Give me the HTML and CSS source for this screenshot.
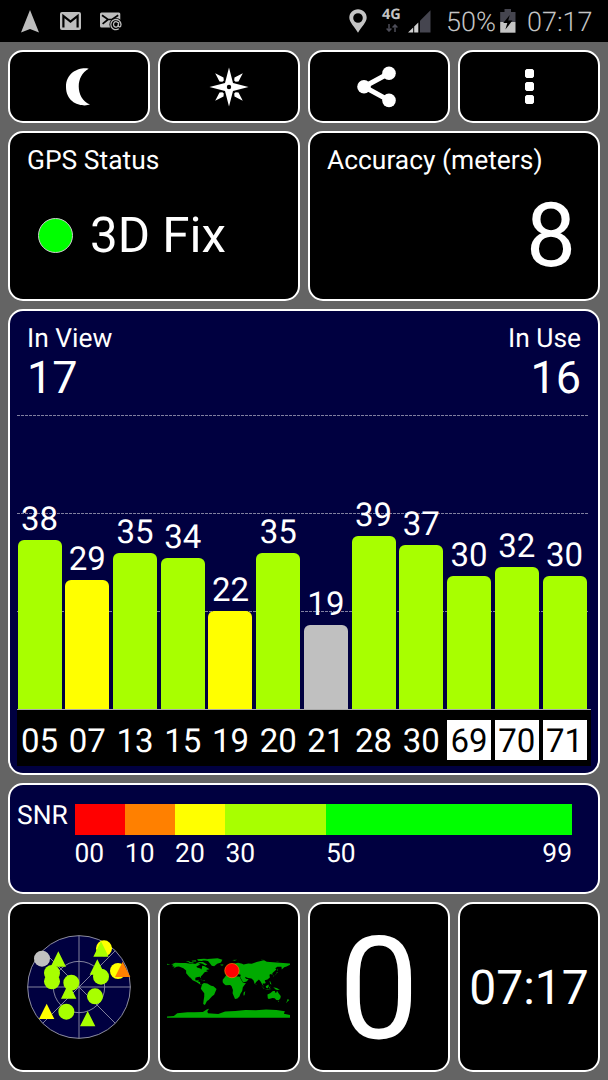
FILE: index.html
```html
<!doctype html>
<html>
<head>
  <meta charset="utf-8">
  <title>GPS Status</title>
  <link rel="stylesheet" href="styles.css">
</head>
<body>
  <div class="statusbar">
    <svg class="ic-nav" width="18" height="23" viewBox="0 0 18 23"><path d="M9 0L18 22.5L9 19L0 22.5Z" fill="#bdbdbd"/></svg>
    <svg class="ic-mail" width="21" height="18" viewBox="0 0 21 18">
      <rect width="21" height="18" rx="2" fill="#bdbdbd"/>
      <path d="M3.4 15.5V4L10.5 9.6L17.6 4V15.5" fill="none" stroke="#000" stroke-width="2.2"/>
    </svg>
    <svg class="ic-mailat" width="22" height="19" viewBox="0 0 22 19">
      <rect y="0.5" width="20.3" height="15" rx="1.5" fill="#bdbdbd"/>
      <path d="M2 3.2L8 7.5H12L18.2 3.2M2.6 11.8L8 7.5M12 7.5L14 9" fill="none" stroke="#000" stroke-width="1.7"/>
      <circle cx="16" cy="12.5" r="6.6" fill="#000"/>
      <path d="M18.8 16.8A5.1 5.1 0 1 1 21 12.4C21 15.4 18.2 15.4 18.3 13.5L18.7 10.2M18.3 12.6A2.4 2.7 0 1 1 17.9 10.9" fill="none" stroke="#bdbdbd" stroke-width="1.3"/>
    </svg>
    <span class="space"></span>
    <svg class="ic-pin" width="18" height="24" viewBox="0 0 18 24"><path fill-rule="evenodd" d="M9 0.3C14 .3 17.7 4 17.7 8.7C17.7 13.5 12 18 9 23.7C6 18 .3 13.5 .3 8.7C.3 4 4 .3 9 .3ZM9 4.2A4.8 4.8 0 1 0 9 13.8A4.8 4.8 0 1 0 9 4.2Z" fill="#c4c4c4"/></svg>
    <div class="net">
      <span>4G</span>
      <svg width="12" height="8" viewBox="0 0 12 8"><path d="M3 0V7M.6 4.4L3 7L5.4 4.4M9 8V1M6.6 3.6L9 1L11.4 3.6" fill="none" stroke="#4d4d58" stroke-width="1.5"/></svg>
    </div>
    <svg class="ic-signal" width="23" height="23" viewBox="0 0 23 23">
      <path d="M0 22.5L5.2 17.5V22.5ZM6.2 16.5L10.3 12.4V22.5H6.2Z" fill="#cfcfcf"/>
      <path d="M12 10.8L22.5 .3V22.5H12Z" fill="#45454f"/>
    </svg>
    <span class="pct">50%</span>
    <svg class="ic-batt" width="16" height="24" viewBox="0 0 16 24">
      <path d="M4.5 0H11V3H15.5V13H.2V3H4.5Z" fill="#45454f"/>
      <path d="M.2 13H15.5V23.7H.2Z" fill="#c4c4c4"/>
      <path d="M9.8 6L3.2 14H7.3L5.4 20.6L12.4 11.6H8.2Z" fill="#000"/>
    </svg>
    <span class="clock">07:17</span>
  </div>

  <div class="board">
    <div class="card">
      <svg class="moon" width="24" height="38" viewBox="0 0 24 38"><path d="M22.7 .8C15 -1.3 0 3.4 0 19C0 35 15.5 39.5 24 36.6C9.2 31 9.2 7.5 22.7 .8Z" fill="#fff"/></svg>
    </div>
    <div class="card">
      <svg width="40" height="40" viewBox="-20 -20 40 40">
        <path d="M0 -19.5L4 -4L19.5 0L4 4L0 19.5L-4 4L-19.5 0L-4 -4Z" fill="#fff"/>
        <path id="ray" d="M13.8 -13.8L9.5 -5.5L6.6 -5.2L5.2 -6.6L5.5 -9.5Z" fill="#fff"/>
        <use href="#ray" transform="rotate(90)"/>
        <use href="#ray" transform="rotate(180)"/>
        <use href="#ray" transform="rotate(270)"/>
        <circle r="2.2" fill="#000"/>
      </svg>
    </div>
    <div class="card">
      <svg class="share" width="40" height="42" viewBox="0 0 40 42">
        <path d="M32 7.2L7 20.8L32 34.4" fill="none" stroke="#fff" stroke-width="5"/>
        <circle cx="7" cy="20.8" r="6.8" fill="#fff"/>
        <circle cx="32" cy="7.2" r="6.8" fill="#fff"/>
        <circle cx="32" cy="34.4" r="6.8" fill="#fff"/>
      </svg>
    </div>
    <div class="card">
      <svg width="9" height="35" viewBox="0 0 9 35"><path d="M1.5 0H7.5L9 1.5V7.5L7.5 9H1.5L0 7.5V1.5ZM1.5 13H7.5L9 14.5V20.5L7.5 22H1.5L0 20.5V14.5ZM1.5 26H7.5L9 27.5V33.5L7.5 35H1.5L0 33.5V27.5Z" fill="#fff"/></svg>
    </div>

    <div class="card half">
      <div class="title">GPS Status</div>
      <div class="fix"><span class="led"></span>3D Fix</div>
    </div>
    <div class="card half">
      <div class="title">Accuracy (meters)</div>
      <div class="accuracy">8</div>
    </div>

    <div class="card full sats">
      <div class="counts">
        <div>In View<b>17</b></div>
        <div class="right">In Use<b>16</b></div>
      </div>
      <div class="plot">
        <div class="sat"><span>38</span><i class="good" style="height:169px"></i></div>
        <div class="sat"><span>29</span><i class="fair" style="height:129px"></i></div>
        <div class="sat"><span>35</span><i class="good" style="height:156px"></i></div>
        <div class="sat"><span>34</span><i class="good" style="height:151px"></i></div>
        <div class="sat"><span>22</span><i class="fair" style="height:98px"></i></div>
        <div class="sat"><span>35</span><i class="good" style="height:156px"></i></div>
        <div class="sat"><span>19</span><i class="unused" style="height:84px"></i></div>
        <div class="sat"><span>39</span><i class="good" style="height:173px"></i></div>
        <div class="sat"><span>37</span><i class="good" style="height:164px"></i></div>
        <div class="sat"><span>30</span><i class="good" style="height:133px"></i></div>
        <div class="sat"><span>32</span><i class="good" style="height:142px"></i></div>
        <div class="sat"><span>30</span><i class="good" style="height:133px"></i></div>
      </div>
      <div class="ids">
        <span>05</span><span>07</span><span>13</span><span>15</span><span>19</span><span>20</span><span>21</span><span>28</span><span>30</span><span class="glonass">69</span><span class="glonass">70</span><span class="glonass">71</span>
      </div>
    </div>

    <div class="card full snr">
      <div class="snr-name">SNR</div>
      <div class="scale">
        <div class="s0"><i></i>00</div>
        <div class="s10"><i></i>10</div>
        <div class="s20"><i></i>20</div>
        <div class="s30"><i></i>30</div>
        <div class="s50"><i></i><span>50</span><span>99</span></div>
      </div>
    </div>

    <div class="card">
      <!-- sky view -->
      <svg class="sky" width="104" height="104" viewBox="-156 -156 312 312">
        <circle r="154" fill="#000040" stroke="#a9a9b4" stroke-width="2.5"/>
        <g fill="none" stroke="#9c9cb0" stroke-width="2.5">
          <circle r="77"/>
          <path d="M-154 0H154M0 -154V154M-109 -109L109 109M-109 109L109 -109"/>
        </g>
        <circle cx="-111" cy="-85" r="24" fill="#c0c0c0"/>
        <g fill="#ff0">
          <circle cx="75" cy="-116" r="24"/>
          <circle cx="117" cy="-48" r="24"/>
          <path d="M-97 50L-74 96H-120Z"/>
        </g>
        <path d="M131 -76L154 -30H108Z" fill="#ff8000"/>
        <g fill="#a8ff00">
          <path d="M66 -137L89 -91H43ZM-62 -107L-39 -61H-85ZM55 -83L78 -37H32ZM-31 -12L-8 35H-54ZM26 72L49 118H3Z"/>
          <circle cx="-81" cy="-42" r="24"/>
          <circle cx="-81" cy="-17" r="24"/>
          <circle cx="-23" cy="-13" r="24"/>
          <circle cx="66" cy="-31" r="24"/>
          <circle cx="48" cy="28" r="24"/>
          <circle cx="-38" cy="74" r="24"/>
        </g>
      </svg>
    </div>
    <div class="card">
      <!-- world map, one unit per degree -->
      <svg class="world" width="123" height="62" viewBox="-180 -90 360 180">
        <g fill="#0a0">
          <!-- americas -->
          <path d="M-168 -66L-156 -71L-140 -70L-125 -70L-110 -68L-95 -68L-92 -72L-86 -69L-82 -67L-87 -64L-94 -60L-92 -57L-82 -54L-80 -51L-78 -55L-77 -62L-70 -61L-65 -58L-60 -55L-56 -52L-66 -50L-60 -46L-70 -43L-76 -36L-81 -31L-80 -25L-84 -30L-90 -29L-97 -27L-97 -20L-91 -19L-87 -21L-89 -16L-83 -15L-83 -9L-77 -8L-83 -7L-94 -15L-105 -20L-114 -31L-110 -24L-117 -32L-124 -40L-124 -48L-132 -55L-145 -60L-152 -59L-162 -54L-157 -59L-165 -61L-161 -65Z"/>
          <path d="M-77 -8L-72 -12L-62 -10L-51 -4L-44 -2L-35 6L-39 15L-42 23L-48 27L-54 34L-58 38L-63 41L-66 47L-69 53L-74 50L-73 40L-71 28L-71 18L-81 5L-79 -2Z"/>
          <path d="M-73 -78L-60 -82L-32 -84L-18 -80L-22 -72L-33 -68L-42 -61L-49 -62L-54 -69L-60 -76ZM-90 -73L-75 -73L-62 -66L-68 -63L-76 -68L-88 -71ZM-117 -73L-102 -72L-103 -69L-115 -70ZM-92 -81L-72 -83L-62 -82L-78 -76L-89 -77ZM-125 -74L-116 -76L-112 -76L-118 -73ZM-108 -77L-96 -78L-94 -75L-106 -75ZM-24 -66L-15 -66L-16 -63L-22 -63ZM-84 -23L-75 -20L-78 -20ZM-74 -20L-68 -19L-72 -17Z"/>
          <!-- eurasia -->
          <path d="M-9 -43L-9 -37L-5 -36L0 -38L4 -43L9 -44L16 -38L18 -40L13 -45L19 -42L23 -36L27 -41L30 -37L36 -36L34 -29L43 -13L53 -16L59 -23L51 -24L48 -30L57 -26L67 -25L73 -20L77 -8L81 -15L89 -22L94 -16L98 -9L103 -1L100 -10L106 -10L109 -12L106 -20L114 -22L121 -28L120 -36L125 -39L127 -35L129 -37L128 -40L140 -51L137 -55L143 -59L155 -59L156 -51L163 -58L170 -60L180 -65V-69L160 -70L140 -72L112 -74L104 -78L82 -73L68 -68L58 -69L44 -66L40 -68L28 -71L15 -68L5 -62L8 -58L12 -56L18 -60L22 -65L22 -60L28 -60L20 -55L8 -54L-2 -49L-1 -44Z"/>
          <path d="M-6 -58L-3 -58L1 -52L-5 -50ZM-10 -55L-6 -54L-7 -52L-10 -52ZM11 -79L25 -80L18 -77ZM52 -71L68 -77L58 -73ZM95 -80L105 -79L98 -78ZM138 -75L150 -75L143 -74ZM142 -54L144 -50L142 -46ZM130 -33L136 -34L140 -39L145 -44L141 -43L139 -36L131 -31ZM80 -9L82 -7L80 -6ZM-180 -68L-170 -66L-180 -65Z"/>
          <!-- africa -->
          <path d="M-6 -36L10 -37L11 -33L20 -31L32 -31L37 -21L43 -12L51 -12L42 1L40 12L35 20L32 28L26 34L19 35L12 18L13 9L9 -2L5 -6L-8 -5L-13 -9L-17 -14L-17 -21L-10 -30ZM49 12L47 24L44 25L44 17Z"/>
          <!-- oceania -->
          <path d="M114 22L122 18L130 12L136 12L136 16L140 17L142 11L147 19L153 26L152 33L147 39L140 38L135 33L129 32L118 35L115 33ZM145 41L148 41L147 44ZM173 35L178 38L174 42L168 47L171 42ZM95 -5L105 5L106 6L114 8L103 5ZM109 -2L117 -7L118 -2L115 4L110 2ZM120 -1L124 -1L121 1L123 5L119 4ZM131 1L141 3L150 8L143 9L138 7ZM120 -18L122 -17L126 -7L122 -9ZM106 6L119 8L126 9L115 9Z"/>
          <!-- antarctica -->
          <path d="M-180 86L-160 85L-150 77L-120 74L-100 74L-75 73L-64 66L-57 64L-62 72L-60 77L-30 79L-10 72L20 70L50 67L80 68L110 66L140 67L165 71L162 78L180 82V90H-180Z"/>
        </g>
        <circle cx="10" cy="-48" r="21" fill="red" stroke="#ff8000" stroke-width="2"/>
      </svg>
    </div>
    <div class="card speed">0</div>
    <div class="card time">07:17</div>
  </div>
</body>
</html>
```
FILE: styles.css
```css
html, body {
  width: 100%;
  height: 100%;
  overflow: hidden;
  margin: 0px;
  padding: 0px;
  font-family: Roboto, sans-serif;
  text-rendering: geometricPrecision;
  background: #646464;
  color: #fff;
}
svg {
  display: block;
  flex: none;
}

/* android status bar */
.statusbar {
  display: flex;
  height: 42px;
  background: #000;
  color: #c4c4c4;
  font-size: 27px;
  font-weight: 300;
  line-height: 45px;
}
.space {
  flex: 1;
}
.ic-nav { margin: 10px 0 0 21px; }
.ic-mail { margin: 12px 0 0 21px; }
.ic-mailat { margin: 12px 0 0 19px; }
.ic-pin { margin: 9px 0 0 0; }
.ic-signal { margin: 10px 0 0 7px; }
.ic-batt { margin: 9px 0 0 5px; }
.net {
  width: 19px;
  margin: 7px 0 0 15px;
  font: bold 14.5px/16px "Open Sans", sans-serif;
}
.net svg {
  margin: 1px 0 0 4px;
}
.pct {
  width: 49px;
  margin-left: 15px;
}
.clock {
  width: 65px;
  margin: 0 16px 0 11px;
}

.board {
  display: grid;
  grid-template-columns: repeat(4, 142px);
  grid-template-rows: 73px 170px 466px 111px 170px;
  gap: 8px;
  padding: 8px;
}
.card {
  display: flex;
  align-items: center;
  justify-content: center;
  box-sizing: border-box;
  border: 2px solid #fff;
  border-radius: 15px;
  background: #000;
}
.moon {
  margin-right: 2px;
}
.share {
  margin-right: 4px;
}
.half {
  display: block;
  grid-column: span 2;
  padding: 13px 17px 0;
}
.full {
  display: block;
  grid-column: span 4;
  background: #000040;
}
.title {
  font-size: 26.4px;
  line-height: 30px;
}
.fix {
  display: flex;
  align-items: center;
  margin-top: 29px;
  padding-left: 11px;
  font-size: 49.3px;
  line-height: 62px;
}
.led {
  box-sizing: border-box;
  width: 35px;
  height: 35px;
  margin: 0 17px 2px 0;
  border: 1px solid #ccc;
  border-radius: 50%;
  background: #0f0;
}
.accuracy {
  margin-top: 10px;
  padding-right: 5px;
  text-align: right;
  font-size: 89px;
  line-height: 99px;
}

/* satellite bars */
.sats {
  padding: 13px 7px 0;
}
.counts {
  display: flex;
  justify-content: space-between;
  height: 91px;
  padding: 0 10px;
  font-size: 26.4px;
  line-height: 30px;
}
.counts b {
  display: block;
  font-size: 45px;
  font-weight: normal;
  line-height: 47px;
}
.right {
  text-align: right;
}
.plot, .ids {
  display: grid;
  grid-template-columns: repeat(12, 44px);
  column-gap: 3.73px;
  padding-left: 0.6px;
}
.plot {
  height: 294px;
  border-bottom: 1px solid #aaa;
  background: repeating-linear-gradient(90deg, #8080a0 0 3px, transparent 3px 4px) 0 0 / 572px 1px no-repeat,
    repeating-linear-gradient(90deg, #8080a0 0 3px, transparent 3px 4px) 0 98px / 572px 1px no-repeat,
    repeating-linear-gradient(90deg, #8080a0 0 3px, transparent 3px 4px) 0 196px / 572px 1px no-repeat;
}
.sat {
  display: flex;
  flex-direction: column;
  justify-content: flex-end;
  text-align: center;
  font-size: 33px;
  line-height: 40px;
}
.sat i {
  display: block;
  border-radius: 6px 6px 0 0;
}
.good { background: #a8ff00; }
.fair { background: #ff0; }
.unused { background: #c0c0c0; }
.ids {
  height: 56px;
  align-items: center;
  box-sizing: border-box;
  padding-top: 4px;
  background: #000;
  text-align: center;
  font-size: 33px;
  line-height: 40px;
}
.ids span {
  box-sizing: border-box;
  height: 40px;
  padding-top: 2px;
}
.glonass {
  background: #fff;
  color: #000;
}

/* signal legend */
.snr {
  display: flex;
  align-items: flex-start;
  justify-content: flex-start;
  padding: 19px 0 0 7px;
  font-size: 26.4px;
}
.snr-name {
  width: 57.5px;
  line-height: 24px;
}
.scale {
  display: grid;
  grid-template-columns: 50.3px 50.3px 50.3px 100.6px 246px;
  line-height: 38px;
}
.scale i {
  display: block;
  height: 31px;
}
.s0 i { background: #f00; }
.s10 i { background: #ff8000; }
.s20 i { background: #ff0; }
.s30 i { background: #a8ff00; }
.s50 {
  display: flex;
  flex-wrap: wrap;
  justify-content: space-between;
}
.s50 i {
  width: 100%;
  background: #0f0;
}

.sky, .world {
  margin-right: 1px;
}
.speed {
  padding-top: 4px;
  font-size: 143px;
}
.time {
  font-size: 48px;
}
```
